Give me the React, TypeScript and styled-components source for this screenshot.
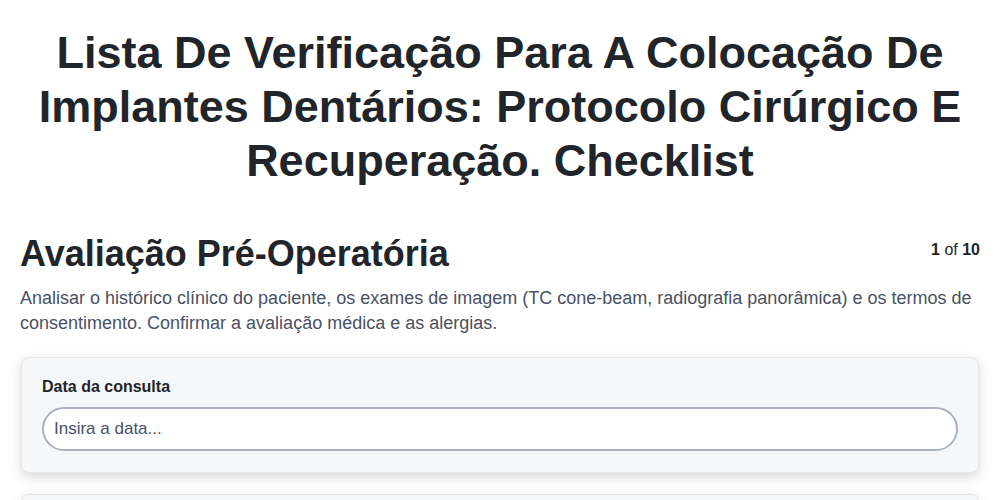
import React from "react";
import styled, { createGlobalStyle } from "styled-components";

const GlobalStyle = createGlobalStyle`
  body {
    margin: 0;
    background: #ffffff;
    font-family: "Liberation Sans", Arial, sans-serif;
    color: #212529;
  }
`;

const Page = styled.main`
  padding: 0 20px 40px;
`;

const Title = styled.h1`
  margin: 26px 0 0;
  padding: 0 10px;
  text-align: center;
  font-size: 45px;
  line-height: 1.2;
  font-weight: 700;
  color: #212529;
`;

const StepHeader = styled.div`
  display: flex;
  justify-content: space-between;
  align-items: flex-start;
  margin-top: 44px;
`;

const StepTitle = styled.h2`
  margin: 0;
  font-size: 36px;
  line-height: 1.2;
  font-weight: 700;
  color: #212529;
`;

const Counter = styled.div`
  font-size: 16px;
  color: #212529;
  margin-top: 9px;

  b {
    font-weight: 700;
  }
`;

const Description = styled.p`
  margin: 11px 0 21px;
  font-size: 18px;
  line-height: 25px;
  color: #4a5163;
`;

const Card = styled.section`
  background: #f6f7f9;
  border: 1px solid #e4e6ea;
  border-radius: 8px;
  box-shadow: 0 4px 12px rgba(0, 0, 0, 0.16);
  padding: 20px 20px 21px;
  margin: 0 1px 21px;
`;

const Label = styled.label`
  display: block;
  font-size: 16px;
  font-weight: 700;
  color: #212529;
  margin-bottom: 11px;
`;

const Input = styled.input`
  display: block;
  box-sizing: border-box;
  width: 100%;
  height: 44px;
  padding: 0 10px;
  border: 2px solid #aab3bd;
  border-radius: 22px;
  background: #ffffff;
  font-family: "Liberation Sans", Arial, sans-serif;
  font-size: 17px;
  color: #212529;
  outline: none;

  &::placeholder {
    color: #4a5163;
  }
`;

export default function App() {
  return (
    <>
      <GlobalStyle />
      <Page>
        <Title>
          Lista De Verificação Para A Colocação De Implantes Dentários:
          Protocolo Cirúrgico E Recuperação. Checklist
        </Title>
        <StepHeader>
          <StepTitle>Avaliação Pré-Operatória</StepTitle>
          <Counter>
            <b>1</b> of <b>10</b>
          </Counter>
        </StepHeader>
        <Description>
          Analisar o histórico clínico do paciente, os exames de imagem (TC
          cone-beam, radiografia panorâmica) e os termos de consentimento.
          Confirmar a avaliação médica e as alergias.
        </Description>
        <Card>
          <Label htmlFor="data">Data da consulta</Label>
          <Input id="data" placeholder="Insira a data..." />
        </Card>
        <Card>
          <Label htmlFor="medico">Médico responsável</Label>
          <Input id="medico" placeholder="Insira o nome..." />
        </Card>
      </Page>
    </>
  );
}
